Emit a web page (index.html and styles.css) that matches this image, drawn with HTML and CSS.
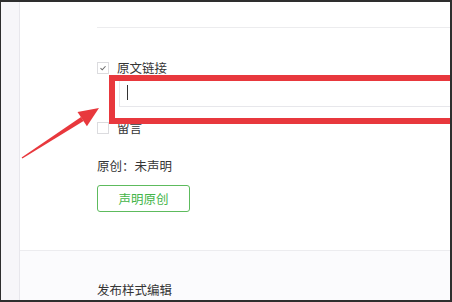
FILE: index.html
```html
<!DOCTYPE html>
<html lang="zh-CN">
<head>
<meta charset="UTF-8">
<meta name="viewport" content="width=device-width,initial-scale=1">
<title>原文链接</title>
<link rel="stylesheet" href="styles.css">
</head>
<body>

<div class="frame">
	<div class="side"></div>
	<div class="main">
		<div class="panel">
			<div class="rule"></div>

			<label class="check-row first">
				<span class="box checked">
					<svg viewBox="0 0 12 12"><path d="M3 6.2 5.1 8.2 9 3.9" fill="none" stroke="#6b6b6b" stroke-width="1.3"/></svg>
				</span>
				原文链接
			</label>

			<div class="link-field">
				<div class="field"><span class="caret"></span></div>
				<div class="mark"></div>
			</div>

			<label class="check-row second">
				<span class="box"></span>
				留言
			</label>

			<p class="status">原创：未声明</p>
			<button class="declare">声明原创</button>
		</div>
		<div class="foot">
			<p class="foot-title">发布样式编辑</p>
		</div>
	</div>

	<svg class="arrow" viewBox="0 0 452 302" xmlns="http://www.w3.org/2000/svg">
		<polygon points="21.6,157.4 22.4,158.6 83.6,121 81,117" fill="#e8383d"/>
		<polygon points="99,108 77.5,112 86.9,126.2" fill="#e8383d"/>
	</svg>
</div>

</body>
</html>
```

FILE: styles.css
```css
html, body {
	margin: 0;
	padding: 0;
	background: #fff;
}
.frame {
	position: relative;
	box-sizing: border-box;
	width: 452px;
	height: 302px;
	border-top: 2px solid #2e2e2e;
	border-left: 1px solid #2e2e2e;
	border-right: 2px solid #2e2e2e;
	border-bottom: 2px solid #2e2e2e;
	display: flex;
	overflow: hidden;
	font-family: "Noto Sans CJK SC", "Noto Sans", sans-serif;
	font-size: 12.5px;
	color: #353535;
}
.side {
	width: 18px;
	flex: none;
	background: #f7f6f9;
	border-right: 1px solid #e8e7ec;
}
.main {
	flex: 1;
	display: flex;
	flex-direction: column;
	min-width: 0;
}
.panel {
	position: relative;
	height: 248px;
	padding-left: 77px;
	background: #fff;
}
.rule {
	margin-top: 25px;
	height: 1px;
	background: #ececee;
}

.check-row {
	display: flex;
	align-items: center;
	gap: 8px;
	height: 14px;
	line-height: 14px;
}
.check-row.first {
	margin-top: 33px;
}
.check-row.second {
	margin-top: 14px;
}
.box {
	box-sizing: border-box;
	width: 12px;
	height: 12px;
	border: 1px solid #dcdcdf;
	background: #fff;
	display: flex;
}
.box svg {
	width: 10px;
	height: 10px;
}

.link-field {
	position: relative;
	margin-top: 5px;
	margin-left: 22px;
}
.field {
	box-sizing: border-box;
	height: 27px;
	border: 1px solid #e7e7eb;
	border-right: 0;
	padding: 4px 0 0 7px;
}
.caret {
	display: block;
	width: 1px;
	height: 15px;
	background: #333;
}
.mark {
	position: absolute;
	left: -10px;
	top: -5px;
	width: 400px;
	height: 49px;
	box-sizing: border-box;
	border: 6px solid #e8383d;
}

.status {
	margin: 23px 0 0;
	line-height: 16px;
}
.declare {
	margin-top: 11px;
	box-sizing: border-box;
	width: 93px;
	height: 27px;
	border: 1px solid #5dbb5d;
	border-radius: 3px;
	background: #fff;
	color: #44b549;
	font-family: inherit;
	font-size: 12.5px;
	padding: 0;
}

.foot {
	flex: 1;
	background: #fbfbfd;
	border-top: 1px solid #ececef;
	padding-left: 77px;
}
.foot-title {
	margin: 31px 0 0;
	line-height: 16px;
	font-size: 12.5px;
}

.arrow {
	position: absolute;
	left: -1px;
	top: -2px;
	width: 452px;
	height: 302px;
	pointer-events: none;
}
```
